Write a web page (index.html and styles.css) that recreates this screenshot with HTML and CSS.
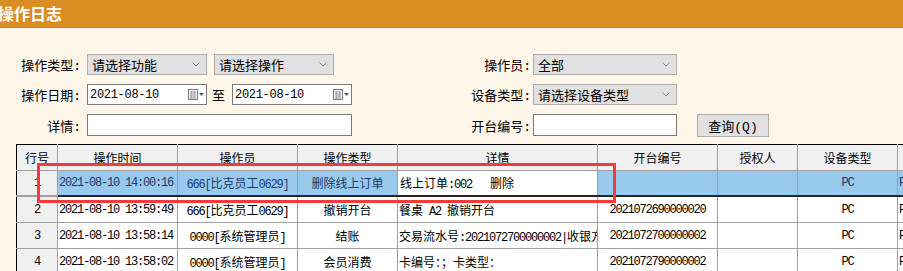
FILE: index.html
```html
<!DOCTYPE html><html><head><meta charset="utf-8"><meta name="viewport" content="width=device-width">
<title>操作日志</title>
<link rel="stylesheet" href="styles.css">
</head>
<body>

<div class="titlebar"><h1>操作日志</h1></div>

<div class="filters">
	<label class="lbl">操作类型:</label>
	<div class="pair">
		<div class="box sel w120">请选择功能<svg width="8" height="5" viewBox="0 0 8 5"><path d="M.5.5 4 4 7.5.5" fill="none" stroke="#888"/></svg></div>
		<div class="box sel w120">请选择操作<svg width="8" height="5" viewBox="0 0 8 5"><path d="M.5.5 4 4 7.5.5" fill="none" stroke="#888"/></svg></div>
	</div>
	<label class="lbl r">操作员:</label>
	<div class="box sel">全部<svg width="8" height="5" viewBox="0 0 8 5"><path d="M.5.5 4 4 7.5.5" fill="none" stroke="#888"/></svg></div>
	<div></div>

	<label class="lbl">操作日期:</label>
	<div class="pair">
		<div class="box date"><span class="d">2021-08-10</span><svg width="16" height="11" viewBox="0 0 16 11"><rect x=".5" y=".5" width="9" height="10" fill="#eeeeee" stroke="#7e7e7e"/><path d="M2 3h6M2 5h6M2 7h6M2 9h6M3.5 2v8M6.5 2v8" stroke="#a8a8a8"/><path d="M11 4h5l-2.5 3z" fill="#3d5fa8"/></svg></div>
		<span class="to">至</span>
		<div class="box date"><span class="d">2021-08-10</span><svg width="16" height="11" viewBox="0 0 16 11"><rect x=".5" y=".5" width="9" height="10" fill="#eeeeee" stroke="#7e7e7e"/><path d="M2 3h6M2 5h6M2 7h6M2 9h6M3.5 2v8M6.5 2v8" stroke="#a8a8a8"/><path d="M11 4h5l-2.5 3z" fill="#3d5fa8"/></svg></div>
	</div>
	<label class="lbl r">设备类型:</label>
	<div class="box sel">请选择设备类型<svg width="8" height="5" viewBox="0 0 8 5"><path d="M.5.5 4 4 7.5.5" fill="none" stroke="#888"/></svg></div>
	<div></div>

	<label class="lbl">详情:</label>
	<div class="box txt"></div>
	<label class="lbl r">开台编号:</label>
	<div class="box txt"></div>
	<button class="btn">查询(Q)</button>
</div>

<div class="grid-wrap">
<table class="grid">
<colgroup><col style="width:41px"><col style="width:120px"><col style="width:120px"><col style="width:100px"><col style="width:200px"><col style="width:120px"><col style="width:80px"><col style="width:100px"><col style="width:100px"></colgroup>
<thead>
<tr><th>行号</th><th>操作时间</th><th>操作员</th><th>操作类型</th><th>详情</th><th>开台编号</th><th>授权人</th><th>设备类型</th><th></th></tr>
</thead>
<tbody>
<tr class="cur">
	<td class="rn n">1</td>
	<td class="n">2021-08-10 14:00:16</td>
	<td class="c"><span class="n">666[</span>比克员工<span class="n">0629]</span></td>
	<td class="c">删除线上订单</td>
	<td class="edit">线上订单<span class="n">:002&nbsp;&nbsp;&nbsp;</span>删除</td>
	<td class="c n"></td>
	<td></td>
	<td class="c n">PC</td>
	<td class="n">PC</td>
</tr>
<tr>
	<td class="rn n">2</td>
	<td class="n">2021-08-10 13:59:49</td>
	<td class="c"><span class="n">666[</span>比克员工<span class="n">0629]</span></td>
	<td class="c">撤销开台</td>
	<td>餐桌<span class="n">&nbsp;A2&nbsp;</span>撤销开台</td>
	<td class="c n">2021072690000020</td>
	<td></td>
	<td class="c n">PC</td>
	<td class="n">PC</td>
</tr>
<tr>
	<td class="rn n">3</td>
	<td class="n">2021-08-10 13:58:14</td>
	<td class="c"><span class="n">0000[</span>系统管理员<span class="n">]</span></td>
	<td class="c">结账</td>
	<td>交易流水号<span class="n">:2021072700000002|</span>收银方式</td>
	<td class="c n">2021072700000002</td>
	<td></td>
	<td class="c n">PC</td>
	<td class="n">PC</td>
</tr>
<tr>
	<td class="rn n">4</td>
	<td class="n">2021-08-10 13:58:02</td>
	<td class="c"><span class="n">0000[</span>系统管理员<span class="n">]</span></td>
	<td class="c">会员消费</td>
	<td>卡编号：；卡类型：</td>
	<td class="c n">2021072790000002</td>
	<td></td>
	<td class="c n">PC</td>
	<td class="n">PC</td>
</tr>
</tbody>
</table>
</div>

<div class="mark"></div>

</body>
</html>
```

FILE: styles.css
```css
html, body {
	overflow: hidden;
}
body {
	margin: 0;
	background: #fef6e9;
	font-family: "Liberation Mono", "Noto Sans CJK SC", monospace;
	font-size: 13px;
	color: #000;
	position: relative;
}
.titlebar {
	height: 27px;
	background: #d98d23;
	border-bottom: 1px solid #8c8c8c;
}
.titlebar h1 {
	margin: 0 0 0 -2px;
	font: bold 16px/27px "Noto Sans CJK SC", sans-serif;
	color: #fff;
}

.filters {
	display: grid;
	grid-template-columns: 87px 265px 181px 144px auto;
	grid-template-rows: 21px 21px 22px;
	row-gap: 9px;
	padding-top: 26px;
	align-items: center;
}
.lbl {
	text-align: right;
	padding-right: 6px;
	white-space: nowrap;
}
.lbl.r {
	padding-right: 2px;
}
.pair {
	display: flex;
	align-items: center;
	height: 21px;
}
.box {
	box-sizing: border-box;
	height: 21px;
	display: flex;
	align-items: center;
	white-space: nowrap;
}
.sel {
	background: #e1e1e1;
	border: 1px solid #adadad;
	padding: 0 6px 0 4px;
	justify-content: space-between;
}
.w120 {
	width: 120px;
}
.w120 + .w120 {
	margin-left: 7px;
}
.date {
	width: 120px;
	background: #fff;
	border: 1px solid #7a7a7a;
	padding: 0 2px 0 2px;
	justify-content: space-between;
}
.d {
	font-size: 12px;
	letter-spacing: -0.3px;
}
.to {
	width: 25px;
	padding-left: 5px;
	box-sizing: border-box;
}
.txt {
	height: 22px;
	background: #fff;
	border: 1px solid #7a7a7a;
}
.btn {
	margin-left: 20px;
	width: 72px;
	height: 23px;
	background: #e1e1e1;
	border: 1px solid #adadad;
	font: inherit;
	padding: 0;
}

.grid-wrap {
	margin: 8px 0 0 16px;
	overflow: hidden;
}
.grid {
	border-collapse: collapse;
	table-layout: fixed;
	width: 981px;
	font-size: 12px;
	background: #fff;
}
.grid th, .grid td {
	height: 25px;
	padding: 0 1px;
	border: 1px solid #a0a0a0;
	white-space: nowrap;
	overflow: hidden;
	text-align: left;
}
.grid th {
	background: #f0f0f0;
	font-weight: normal;
	text-align: center;
	border-top: 1px solid #000;
	font-family: "Noto Sans CJK SC", sans-serif;
}
.grid th:first-child, .grid td:first-child {
	border-left: 1px solid #000;
}
.grid td.c {
	text-align: center;
}
.grid td.rn {
	background: #f0f0f0;
	text-align: center;
}
.n {
	letter-spacing: -1.2px;
}
.grid tr.cur td {
	height: 24px;
	background: #9ac9ee;
	color: #1c3a66;
	border-bottom: 2px solid #262626;
}
.grid tr.cur td.rn {
	background: #f0f0f0;
	color: #000;
	border-bottom-color: #a0a0a0;
}
.grid tr.cur td.edit {
	background: #fff;
	color: #000;
	padding-left: 2px;
}

.mark {
	position: absolute;
	left: 37px;
	top: 163px;
	width: 579px;
	height: 40px;
	box-sizing: border-box;
	border: 3px solid #f23b3b;
}
```
